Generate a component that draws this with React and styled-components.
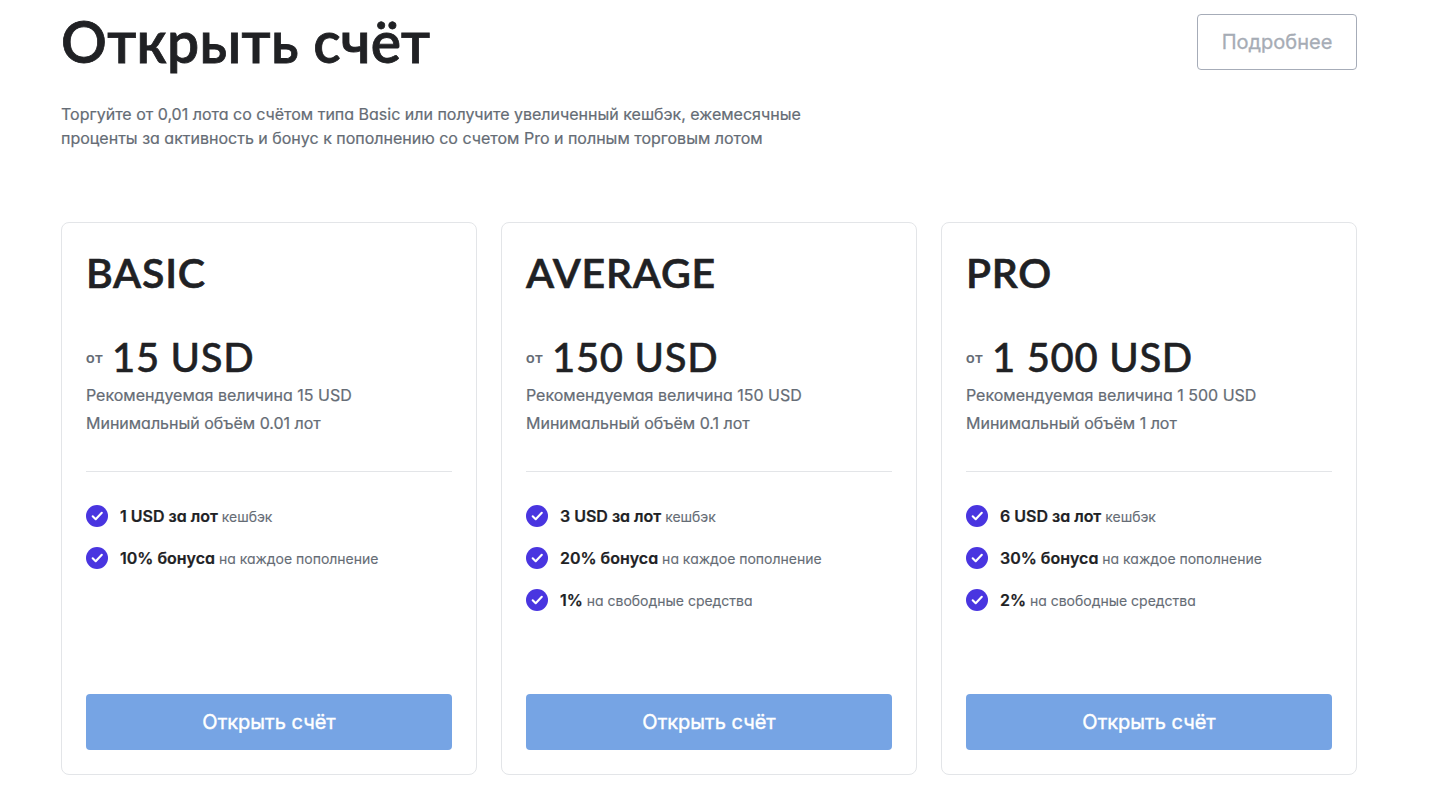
import React from 'react';
import styled, { createGlobalStyle } from 'styled-components';

const GlobalStyle = createGlobalStyle`
  * {
    box-sizing: border-box;
  }

  body {
    margin: 0;
    background: #fff;
    color: #202124;
    font-family: Inter, 'Liberation Sans', sans-serif;
    font-feature-settings: 'cv11';
    -webkit-font-smoothing: antialiased;
  }
`;

const Section = styled.section`
  width: 1296px;
  height: 800px;
  margin-left: 61px;
  padding-top: 14px;
`;

const Header = styled.header`
  display: flex;
  justify-content: space-between;
  align-items: flex-start;
  height: 56px;
`;

const Title = styled.h1`
  margin: 0;
  font-family: Lato, 'Open Sans', sans-serif;
  font-size: 57px;
  font-weight: 600;
  line-height: 54px;
  letter-spacing: 0.3px;
  color: #202124;
  -webkit-text-stroke: 0.8px;
`;

const MoreButton = styled.button`
  width: 160px;
  height: 56px;
  padding: 0;
  border: 1px solid #a6acb8;
  border-radius: 4px;
  background: #fff;
  font-family: inherit;
  font-size: 20px;
  font-weight: 400;
  color: #a6acb5;
  -webkit-text-stroke: 0.3px;
  cursor: pointer;
`;

const Description = styled.p`
  width: 760px;
  margin: 32px 0 72px;
  font-size: 16px;
  line-height: 24px;
  color: #656c75;
  -webkit-text-stroke: 0.2px;
`;

const Plans = styled.div`
  display: grid;
  grid-template-columns: repeat(3, 1fr);
  gap: 24px;
`;

const Card = styled.article`
  display: flex;
  flex-direction: column;
  height: 553px;
  padding: 24px;
  border: 1px solid #e3e5e8;
  border-radius: 8px;
`;

const PlanName = styled.h2`
  margin: 0;
  font-family: Lato, 'Open Sans', sans-serif;
  font-size: 41px;
  font-weight: 600;
  line-height: 52px;
  letter-spacing: 0.8px;
  -webkit-text-stroke: 0.6px;
`;

const Price = styled.div`
  display: flex;
  align-items: flex-start;
  height: 50px;
  margin-top: 32px;
  font-family: Lato, 'Open Sans', sans-serif;
`;

const From = styled.span`
  width: 26px;
  font-size: 15px;
  font-weight: 700;
  line-height: 52px;
  letter-spacing: 0.6px;
  color: #656c75;
`;

const Amount = styled.span`
  font-size: 40px;
  font-weight: 500;
  line-height: 52px;
  letter-spacing: 0.7px;
  white-space: nowrap;
  -webkit-text-stroke: 0.5px;
`;

const Note = styled.p`
  margin: 0;
  font-size: 16px;
  line-height: 28px;
  letter-spacing: -0.01px;
  color: #656c75;
  -webkit-text-stroke: 0.2px;
`;

const Divider = styled.hr`
  width: 100%;
  height: 1px;
  margin: 34px 0 33px;
  border: none;
  background: #e3e5e8;
`;

const Benefits = styled.ul`
  display: flex;
  flex-direction: column;
  gap: 20px;
  margin: 0;
  padding: 0;
  list-style: none;
`;

const Benefit = styled.li`
  display: flex;
  align-items: center;
  height: 22px;
  font-size: 14px;
  line-height: 22px;
  letter-spacing: -0.01px;
  color: #656c75;
  -webkit-text-stroke: 0.1px;
`;

const CheckIcon = styled.svg`
  flex: none;
  width: 22px;
  height: 22px;
  margin-right: 12px;
`;

const Strong = styled.strong`
  font-size: 16px;
  font-weight: 600;
  color: #202124;
  -webkit-text-stroke: 0.2px;
`;

const OpenButton = styled.button`
  width: 100%;
  height: 56px;
  margin-top: auto;
  padding: 0;
  border: none;
  border-radius: 4px;
  background: #76a4e4;
  font-family: inherit;
  font-size: 20px;
  font-weight: 400;
  color: #fff;
  -webkit-text-stroke: 0.4px;
  cursor: pointer;
`;

const plans = [
  {
    name: 'BASIC',
    price: '15 USD',
    minimum: '0.01 лот',
    benefits: [
      ['1 USD за лот', 'кешбэк'],
      ['10% бонуса', 'на каждое пополнение'],
    ],
  },
  {
    name: 'AVERAGE',
    price: '150 USD',
    minimum: '0.1 лот',
    benefits: [
      ['3 USD за лот', 'кешбэк'],
      ['20% бонуса', 'на каждое пополнение'],
      ['1%', 'на свободные средства'],
    ],
  },
  {
    name: 'PRO',
    price: '1 500 USD',
    minimum: '1 лот',
    benefits: [
      ['6 USD за лот', 'кешбэк'],
      ['30% бонуса', 'на каждое пополнение'],
      ['2%', 'на свободные средства'],
    ],
  },
];

function Check() {
  return (
    <CheckIcon viewBox="0 0 22 22" fill="none">
      <circle cx="11" cy="11" r="11" fill="#4935e0" />
      <path
        d="M6.7 11.3L9.7 14.2L15.8 7.8"
        stroke="#fff"
        strokeWidth="2.1"
        strokeLinecap="round"
        strokeLinejoin="round"
      />
    </CheckIcon>
  );
}

function Plan({ plan }) {
  return (
    <Card>
      <PlanName>{plan.name}</PlanName>
      <Price>
        <From>от</From>
        <Amount>{plan.price}</Amount>
      </Price>
      <Note>Рекомендуемая величина {plan.price}</Note>
      <Note>Минимальный объём {plan.minimum}</Note>
      <Divider />
      <Benefits>
        {plan.benefits.map(([value, text]) => (
          <Benefit key={value}>
            <Check />
            <span>
              <Strong>{value}</Strong> {text}
            </span>
          </Benefit>
        ))}
      </Benefits>
      <OpenButton type="button">Открыть счёт</OpenButton>
    </Card>
  );
}

function App() {
  return (
    <>
      <GlobalStyle />
      <Section>
        <Header>
          <Title>Открыть счёт</Title>
          <MoreButton type="button">Подробнее</MoreButton>
        </Header>
        <Description>
          Торгуйте от 0,01 лота со счётом типа Basic или получите увеличенный кешбэк, ежемесячные
          проценты за активность и бонус к пополнению со счетом Pro и полным торговым лотом
        </Description>
        <Plans>
          {plans.map((plan) => (
            <Plan key={plan.name} plan={plan} />
          ))}
        </Plans>
      </Section>
    </>
  );
}

export default App;
